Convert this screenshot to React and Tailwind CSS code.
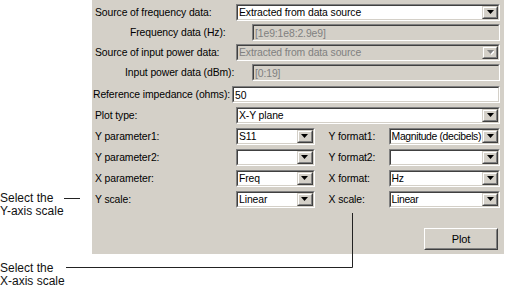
import React from 'react';

const sunken = 'border border-t-[#808080] border-l-[#808080] border-b-white border-r-white';
const sunkenInner = 'border border-t-[#404040] border-l-[#404040] border-b-[#d4d0c8] border-r-[#d4d0c8]';

const ArrowButton = ({ disabled }) => (
  <div className="w-[16px] shrink-0 h-full border border-t-[#d4d0c8] border-l-[#d4d0c8] border-b-[#404040] border-r-[#404040]">
    <div className="w-full h-full flex items-center justify-center bg-[#d4d0c8] border border-t-white border-l-white border-b-[#808080] border-r-[#808080]">
      <svg width="7" height="5" viewBox="0 0 7 5">
        {disabled && <path d="M1 1h7l-3.5 4z" fill="#ffffff" />}
        <path d="M0 0h7l-3.5 4z" fill={disabled ? '#808080' : '#000000'} />
      </svg>
    </div>
  </div>
);

const Combo = ({ value, disabled, className = '', textClass = '' }) => (
  <div className={`h-[17px] ${sunken} ${className}`}>
    <div className={`h-full flex ${sunkenInner} ${disabled ? 'bg-[#d4d0c8]' : 'bg-white'}`}>
      <span className={`flex-1 pl-[1px] leading-[13px] whitespace-nowrap overflow-hidden ${disabled ? 'text-[#808080]' : 'text-black'} ${textClass}`}>
        {value}
      </span>
      <ArrowButton disabled={disabled} />
    </div>
  </div>
);

const Edit = ({ value, disabled, className = '' }) => (
  <div className={`h-[17px] ${sunken} ${className}`}>
    <div className={`h-full ${sunkenInner} ${disabled ? 'bg-[#d4d0c8] text-[#808080]' : 'bg-white text-black'}`}>
      <span className="pl-[1px] leading-[13px] whitespace-nowrap">{value}</span>
    </div>
  </div>
);

const Row = ({ label, labelClass = 'w-[144px] pl-[3px]', children, className = '' }) => (
  <div className={`flex items-center ${className}`}>
    <div className={`shrink-0 whitespace-nowrap ${labelClass}`}>{label}</div>
    {children}
  </div>
);

const PairRow = ({ left, leftValue, right, rightValue, className = '' }) => (
  <div className={`flex items-center ${className}`}>
    <div className="w-[144px] pl-[3px] shrink-0 whitespace-nowrap">{left}</div>
    <Combo value={leftValue} className="w-[79px]" />
    <div className="w-[74px] pl-[14px] shrink-0 whitespace-nowrap">{right}</div>
    <Combo value={rightValue} className="w-[112px]" textClass="tracking-[-0.35px]" />
  </div>
);

export default function App() {
  return (
    <div className="relative w-[508px] h-[301px] bg-white text-[10.4px] tracking-[-0.1px] text-black overflow-hidden" style={{ fontFamily: '"Liberation Sans", Arial, sans-serif' }}>
      <div className="flex">
        {/* Y-axis callout */}
        <div className="w-[92px] shrink-0 pt-[192px] text-[12px] tracking-normal leading-[13px] text-[#111]">
          <div>Select the</div>
          <div>Y-axis scale</div>
        </div>

        {/* Dialog panel */}
        <div className="w-[412px] h-[254px] bg-[#d4d0c8] flex flex-col pt-[4px] pr-[4px]">
          <Row label="Source of frequency data:">
            <Combo value="Extracted from data source" className="flex-1" />
          </Row>
          <Row label="Frequency data (Hz):" labelClass="w-[160px] pl-[38px]" className="mt-[3px]">
            <Edit value="[1e9:1e8:2.9e9]" disabled className="flex-1" />
          </Row>
          <Row label="Source of input power data:" className="mt-[3px]">
            <Combo value="Extracted from data source" disabled className="flex-1" />
          </Row>
          <Row label="Input power data (dBm):" labelClass="w-[160px] pl-[33px]" className="mt-[3px]">
            <Edit value="[0:19]" disabled className="flex-1" />
          </Row>
          <Row label="Reference impedance (ohms):" labelClass="w-[140px] pl-[1px]" className="mt-[5px]">
            <Edit value="50" className="flex-1" />
          </Row>
          <Row label="Plot type:" className="mt-[4px]">
            <Combo value="X-Y plane" className="flex-1" />
          </Row>
          <PairRow left="Y parameter1:" leftValue="S11" right="Y format1:" rightValue="Magnitude (decibels)" className="mt-[4px]" />
          <PairRow left="Y parameter2:" leftValue="" right="Y format2:" rightValue="" className="mt-[4px]" />
          <PairRow left="X parameter:" leftValue="Freq" right="X format:" rightValue="Hz" className="mt-[4px]" />
          <PairRow left="Y scale:" leftValue="Linear" right="X scale:" rightValue="Linear" className="mt-[4px]" />

          <div className="flex justify-end mt-[20px] pr-[2px]">
            <div className="w-[74px] h-[22px] border border-t-white border-l-white border-b-[#404040] border-r-[#404040]">
              <div className="w-full h-full flex items-center justify-center text-[11px] border border-t-[#d4d0c8] border-l-[#d4d0c8] border-b-[#808080] border-r-[#808080]">
                Plot
              </div>
            </div>
          </div>
        </div>
      </div>

      {/* X-axis callout */}
      <div className="pt-[8px] text-[12px] tracking-normal leading-[13px] text-[#111]">
        <div>Select the</div>
        <div>X-axis scale</div>
      </div>

      {/* leader lines */}
      <svg className="absolute inset-0 pointer-events-none" width="508" height="301">
        <line x1="64" y1="198.5" x2="80" y2="198.5" stroke="#222" strokeWidth="1" />
        <polyline points="66,267.5 352.5,267.5 352.5,213" fill="none" stroke="#222" strokeWidth="1" />
      </svg>
    </div>
  );
}
